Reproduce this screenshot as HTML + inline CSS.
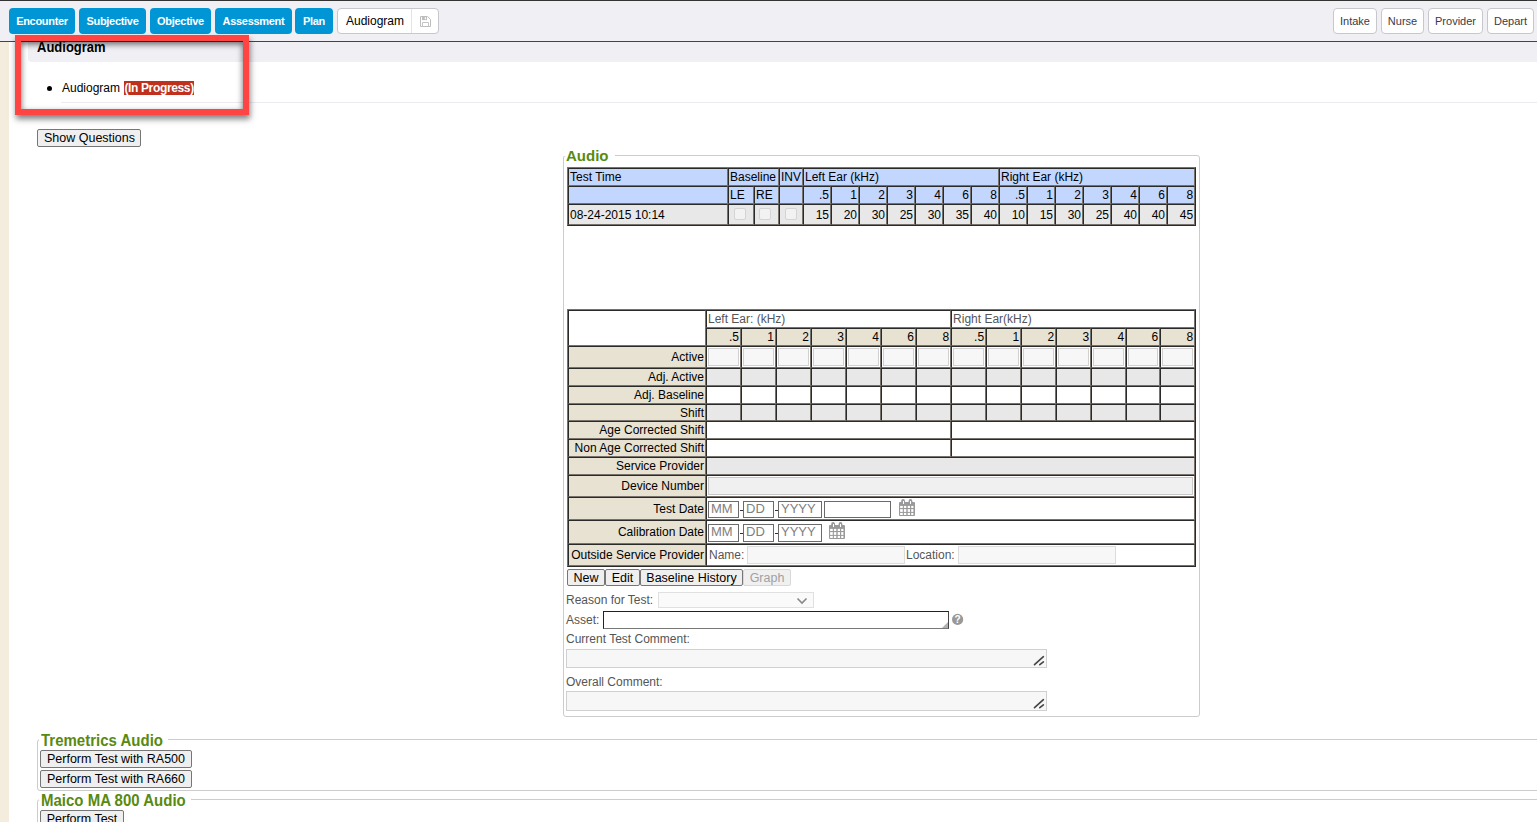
<!DOCTYPE html>
<html><head><meta charset="utf-8">
<style>
*{box-sizing:border-box}
html,body{margin:0;padding:0}
body{width:1537px;height:822px;overflow:hidden;position:relative;background:#fff;font-family:"Liberation Sans",sans-serif;font-size:12px;color:#000}
.abs{position:absolute}
.tb{left:0;top:0;width:1537px;height:42px;background:#efeff4;border-top:1px solid #333;border-bottom:1px solid #444}
.bb{position:absolute;top:8px;height:26px;background:#0096d6;border-radius:4px;color:#fff;font-weight:bold;font-size:11px;letter-spacing:-0.3px;text-align:center;line-height:26px}
.wb{position:absolute;top:8px;height:26px;background:#fff;border:1px solid #c8c8cc;border-radius:4px;color:#3a3a48;font-size:11px;text-align:center;line-height:24px}

.fs{position:absolute;border:1px solid #ccc;border-radius:3px}
.lg{position:absolute;color:#588a10;font-weight:bold;font-size:15px;line-height:17px;transform:scaleY(1.09);transform-origin:0 13px}
.lgc{position:absolute;height:1px;background:#fff}
table.g{position:absolute;border-collapse:separate;border-spacing:0;table-layout:fixed;border-left:1px solid #77736c;border-top:1px solid #77736c;border-right:1px solid #2a2a28;border-bottom:1px solid #2a2a28;font-size:12px}
table.g td{border-left:1px solid #2a2a28;border-top:1px solid #2a2a28;border-right:1px solid #77736c;border-bottom:1px solid #77736c;padding:0 1px;white-space:nowrap;overflow:hidden;line-height:14px}
.hb td{background:#c3d6fe}
.r{text-align:right}
.bg{background:#e8e8e8}
.be{background:#e8e2d3}
.cb{display:block;width:12px;height:12px;border:1px solid #d4d4d4;border-radius:2px;background:#f2f2f2}

.inp{display:block;border:1px solid #d0d0d0;background:#f7f7f7}
.lbl td.be{text-align:right;padding:0}
.dt{position:absolute;height:17px;border:1px solid #6a6a6a;background:#fff;color:#808080;font-size:13px;line-height:13px;padding-left:2px}
.dash{position:absolute;width:3px;height:1px;background:#333}

.btn{position:absolute;height:17px;border:1px solid #767676;border-radius:2px;background:#efefef;font-size:12.5px;line-height:16px;text-align:center;color:#000}
.ph{position:absolute;font-size:12px;line-height:14px;color:#555}
.ta{position:absolute;border:1px solid #d0d0d0;background:#f7f7f7}
</style></head><body>
<!-- toolbar -->
<div class="abs tb"></div>
<div class="bb" style="left:9px;width:66px">Encounter</div>
<div class="bb" style="left:79px;width:67px">Subjective</div>
<div class="bb" style="left:150px;width:61px">Objective</div>
<div class="bb" style="left:215px;width:77px">Assessment</div>
<div class="bb" style="left:295px;width:38px">Plan</div>
<div class="wb" style="left:337px;width:102px;text-align:left;color:#000;font-size:12px;padding-left:8px">Audiogram<div class="abs" style="left:73px;top:0;width:1px;height:24px;background:#e4e4e8"></div><svg class="abs" style="left:82px;top:7px" width="11" height="11" viewBox="0 0 11 11"><path d="M0.5 0.5 H7.6 L10.5 3.4 V10.5 H0.5 Z" stroke="#bdbdbd" fill="none"/><rect x="2" y="0.5" width="5" height="3.6" fill="#bdbdbd"/><rect x="4.8" y="1.2" width="1.1" height="2.2" fill="#fff"/><path d="M2.5 10.5 V6.5 H8.5 V10.5" stroke="#c4c4c4" fill="none"/></svg></div>
<div class="wb" style="left:1333px;width:44px">Intake</div>
<div class="wb" style="left:1381px;width:43px">Nurse</div>
<div class="wb" style="left:1428px;width:55px">Provider</div>
<div class="wb" style="left:1487px;width:47px">Depart</div>

<!-- left strip -->
<div class="abs" style="left:0;top:42px;width:9px;height:780px;background:#f4edde"></div>


<!-- header band -->
<div class="abs" style="left:28px;top:42px;width:1509px;height:20px;background:#efeff4;border-bottom-left-radius:4px"></div>
<div class="abs" style="left:37px;top:40px;font-weight:bold;font-size:13px;line-height:16px;transform:scaleY(1.08);transform-origin:0 100%">Audiogram</div>
<div class="abs" style="left:47px;top:86px;width:5px;height:5px;border-radius:50%;background:#000"></div>
<div class="abs" style="left:62px;top:81px;line-height:14px;font-size:12px">Audiogram <span style="background:#c0301c;color:#fff;font-weight:bold;letter-spacing:-0.35px;margin-left:1px">(In Progress)</span></div>
<div class="abs" style="left:61px;top:102px;width:1476px;height:1px;background:#ebebf0"></div>
<!-- red annotation box -->
<div class="abs" style="left:15px;top:35px;width:234px;height:80px;border:6px solid #ff4444;box-shadow:1px 4px 6px rgba(0,0,0,0.5), inset 0 3px 6px rgba(0,0,0,0.6)"></div>
<!-- show questions -->
<div class="abs" style="left:37px;top:129px;width:104px;height:18px;border:1px solid #767676;border-radius:2px;background:#efefef;font-size:12.5px;line-height:16px;padding-left:6px">Show Questions</div>
<div class="fs" style="left:563px;top:155px;width:637px;height:562px"></div><div class="lgc" style="left:563px;top:154px;width:52px;height:2px"></div><div class="lg" style="left:566px;top:147px;transform:none">Audio</div><table class="g" style="left:567px;top:167px;width:629px"><colgroup><col style="width:160px"><col style="width:26px"><col style="width:25px"><col style="width:24px"><col style="width:28px"><col style="width:28px"><col style="width:28px"><col style="width:28px"><col style="width:28px"><col style="width:28px"><col style="width:28px"><col style="width:28px"><col style="width:28px"><col style="width:28px"><col style="width:28px"><col style="width:28px"><col style="width:28px"><col style="width:28px"></colgroup><tr class="hb" style="height:18px"><td>Test Time</td><td colspan="2">Baseline</td><td>INV</td><td colspan="7">Left Ear (kHz)</td><td colspan="7">Right Ear (kHz)</td></tr><tr class="hb" style="height:18px"><td></td><td>LE</td><td>RE</td><td></td><td class="r">.5</td><td class="r">1</td><td class="r">2</td><td class="r">3</td><td class="r">4</td><td class="r">6</td><td class="r">8</td><td class="r">.5</td><td class="r">1</td><td class="r">2</td><td class="r">3</td><td class="r">4</td><td class="r">6</td><td class="r">8</td></tr><tr class="bg" style="height:21px"><td>08-24-2015 10:14</td><td style="padding:3px 0 0 5px;vertical-align:top"><span class="cb"></span></td><td style="padding:3px 0 0 4px;vertical-align:top"><span class="cb"></span></td><td style="padding:3px 0 0 5px;vertical-align:top"><span class="cb"></span></td><td class="r">15</td><td class="r">20</td><td class="r">30</td><td class="r">25</td><td class="r">30</td><td class="r">35</td><td class="r">40</td><td class="r">10</td><td class="r">15</td><td class="r">30</td><td class="r">25</td><td class="r">40</td><td class="r">40</td><td class="r">45</td></tr></table><table class="g" style="left:567px;top:309px;width:629px"><colgroup><col style="width:138px"><col style="width:35px"><col style="width:35px"><col style="width:35px"><col style="width:35px"><col style="width:35px"><col style="width:35px"><col style="width:35px"><col style="width:35px"><col style="width:35px"><col style="width:35px"><col style="width:35px"><col style="width:35px"><col style="width:34px"><col style="width:35px"></colgroup><tr style="height:18px"><td rowspan="2"></td><td colspan="7" style="color:#555">Left Ear: (kHz)</td><td colspan="7" style="color:#555">Right Ear(kHz)</td></tr><tr style="height:18px"><td class="r be">.5</td><td class="r be">1</td><td class="r be">2</td><td class="r be">3</td><td class="r be">4</td><td class="r be">6</td><td class="r be">8</td><td class="r be">.5</td><td class="r be">1</td><td class="r be">2</td><td class="r be">3</td><td class="r be">4</td><td class="r be">6</td><td class="r be">8</td></tr><tr style="height:22px"><td class="be r" style="padding:0 1px 0 0">Active</td><td style="padding:1px"><span class="inp" style="width:31px;height:18px"></span></td><td style="padding:1px"><span class="inp" style="width:31px;height:18px"></span></td><td style="padding:1px"><span class="inp" style="width:31px;height:18px"></span></td><td style="padding:1px"><span class="inp" style="width:31px;height:18px"></span></td><td style="padding:1px"><span class="inp" style="width:31px;height:18px"></span></td><td style="padding:1px"><span class="inp" style="width:31px;height:18px"></span></td><td style="padding:1px"><span class="inp" style="width:31px;height:18px"></span></td><td style="padding:1px"><span class="inp" style="width:31px;height:18px"></span></td><td style="padding:1px"><span class="inp" style="width:31px;height:18px"></span></td><td style="padding:1px"><span class="inp" style="width:31px;height:18px"></span></td><td style="padding:1px"><span class="inp" style="width:31px;height:18px"></span></td><td style="padding:1px"><span class="inp" style="width:31px;height:18px"></span></td><td style="padding:1px"><span class="inp" style="width:30px;height:18px"></span></td><td style="padding:1px"><span class="inp" style="width:31px;height:18px"></span></td></tr><tr style="height:18px"><td class="be r" style="padding:0 1px 0 0">Adj. Active</td><td class="bg"></td><td class="bg"></td><td class="bg"></td><td class="bg"></td><td class="bg"></td><td class="bg"></td><td class="bg"></td><td class="bg"></td><td class="bg"></td><td class="bg"></td><td class="bg"></td><td class="bg"></td><td class="bg"></td><td class="bg"></td></tr><tr style="height:18px"><td class="be r" style="padding:0 1px 0 0">Adj. Baseline</td><td></td><td></td><td></td><td></td><td></td><td></td><td></td><td></td><td></td><td></td><td></td><td></td><td></td><td></td></tr><tr style="height:17px"><td class="be r" style="padding:0 1px 0 0">Shift</td><td class="bg"></td><td class="bg"></td><td class="bg"></td><td class="bg"></td><td class="bg"></td><td class="bg"></td><td class="bg"></td><td class="bg"></td><td class="bg"></td><td class="bg"></td><td class="bg"></td><td class="bg"></td><td class="bg"></td><td class="bg"></td></tr><tr style="height:18px"><td class="be r" style="padding:0 1px 0 0">Age Corrected Shift</td><td colspan="7"></td><td colspan="7"></td></tr><tr style="height:18px"><td class="be r" style="padding:0 1px 0 0">Non Age Corrected Shift</td><td colspan="7"></td><td colspan="7"></td></tr><tr style="height:18px"><td class="be r" style="padding:0 1px 0 0">Service Provider</td><td colspan="14" class="bg"></td></tr><tr style="height:22px"><td class="be r" style="padding:0 1px 0 0">Device Number</td><td colspan="14" style="padding:1px"><span class="inp" style="height:18px;background:#f0f0f0;border-color:#c8c8c8"></span></td></tr><tr style="height:23px"><td class="be r" style="padding:0 1px 0 0">Test Date</td><td colspan="14"></td></tr><tr style="height:24px"><td class="be r" style="padding:0 1px 0 0">Calibration Date</td><td colspan="14"></td></tr><tr style="height:22px"><td class="be r" style="padding:0 1px 0 0">Outside Service Provider</td><td colspan="14" style="color:#555;padding-left:2px">Name:</td></tr></table><div class="dt" style="left:708px;top:501px;width:31px;height:17px">MM</div><div class="dash" style="left:740px;top:510px"></div><div class="dt" style="left:743px;top:501px;width:31px;height:17px">DD</div><div class="dash" style="left:775px;top:510px"></div><div class="dt" style="left:778px;top:501px;width:44px;height:17px">YYYY</div><div class="dt" style="left:824px;top:501px;width:67px;height:17px"></div><div class="abs" style="left:899px;top:499px;width:17px;height:18px"><svg width="17" height="18" viewBox="0 0 17 18"><rect x="0" y="3" width="16" height="14" rx="1" fill="#9a9a9a"/><rect x="2.2" y="0" width="3.8" height="5.5" rx="1.9" fill="#9a9a9a"/><rect x="9.6" y="0" width="3.8" height="5.5" rx="1.9" fill="#9a9a9a"/><rect x="4" y="2" width="1" height="3" fill="#fff"/><rect x="11" y="2" width="1" height="3" fill="#fff"/><rect x="1.1" y="6.9" width="2.7" height="2.1" fill="#fff"/><rect x="1.1" y="10.1" width="2.7" height="2.8" fill="#fff"/><rect x="1.1" y="13.9" width="2.7" height="2.1" fill="#fff"/><rect x="4.9" y="6.9" width="2.4" height="2.1" fill="#fff"/><rect x="4.9" y="10.1" width="2.4" height="2.8" fill="#fff"/><rect x="4.9" y="13.9" width="2.4" height="2.1" fill="#fff"/><rect x="8.7" y="6.9" width="2.3" height="2.1" fill="#fff"/><rect x="8.7" y="10.1" width="2.3" height="2.8" fill="#fff"/><rect x="8.7" y="13.9" width="2.3" height="2.1" fill="#fff"/><rect x="12.2" y="6.9" width="2.2" height="2.1" fill="#fff"/><rect x="12.2" y="10.1" width="2.2" height="2.8" fill="#fff"/><rect x="12.2" y="13.9" width="2.2" height="2.1" fill="#fff"/></svg></div><div class="dt" style="left:708px;top:524px;width:31px;height:18px">MM</div><div class="dash" style="left:740px;top:533px"></div><div class="dt" style="left:743px;top:524px;width:31px;height:18px">DD</div><div class="dash" style="left:775px;top:533px"></div><div class="dt" style="left:778px;top:524px;width:44px;height:18px">YYYY</div><div class="abs" style="left:829px;top:522px;width:17px;height:18px"><svg width="17" height="18" viewBox="0 0 17 18"><rect x="0" y="3" width="16" height="14" rx="1" fill="#9a9a9a"/><rect x="2.2" y="0" width="3.8" height="5.5" rx="1.9" fill="#9a9a9a"/><rect x="9.6" y="0" width="3.8" height="5.5" rx="1.9" fill="#9a9a9a"/><rect x="4" y="2" width="1" height="3" fill="#fff"/><rect x="11" y="2" width="1" height="3" fill="#fff"/><rect x="1.1" y="6.9" width="2.7" height="2.1" fill="#fff"/><rect x="1.1" y="10.1" width="2.7" height="2.8" fill="#fff"/><rect x="1.1" y="13.9" width="2.7" height="2.1" fill="#fff"/><rect x="4.9" y="6.9" width="2.4" height="2.1" fill="#fff"/><rect x="4.9" y="10.1" width="2.4" height="2.8" fill="#fff"/><rect x="4.9" y="13.9" width="2.4" height="2.1" fill="#fff"/><rect x="8.7" y="6.9" width="2.3" height="2.1" fill="#fff"/><rect x="8.7" y="10.1" width="2.3" height="2.8" fill="#fff"/><rect x="8.7" y="13.9" width="2.3" height="2.1" fill="#fff"/><rect x="12.2" y="6.9" width="2.2" height="2.1" fill="#fff"/><rect x="12.2" y="10.1" width="2.2" height="2.8" fill="#fff"/><rect x="12.2" y="13.9" width="2.2" height="2.1" fill="#fff"/></svg></div><div class="ta" style="left:747px;top:546px;width:158px;height:18px;border-color:#dcdcdc"></div><div class="ph" style="left:906px;top:548px">Location:</div><div class="ta" style="left:958px;top:546px;width:158px;height:18px;border-color:#dcdcdc"></div><div class="btn" style="left:567px;top:569px;width:38px">New</div><div class="btn" style="left:605px;top:569px;width:35px">Edit</div><div class="btn" style="left:640px;top:569px;width:103px">Baseline History</div><div class="btn" style="left:743px;top:569px;width:48px;border-color:#d8d8d8;color:#a0a0a0;background:#f0f0f0">Graph</div><div class="ph" style="left:566px;top:593px">Reason for Test:</div><div class="ta" style="left:658px;top:592px;width:156px;height:16px;border-color:#e0e0e0;background:#fafafa"><svg class="abs" style="left:137px;top:4px" width="12" height="8" viewBox="0 0 12 8"><path d="M1.5 1.5 L6 6 L10.5 1.5" stroke="#888" stroke-width="1.6" fill="none"/></svg></div><div class="ph" style="left:566px;top:613px">Asset:</div><div class="abs" style="left:603px;top:611px;width:346px;height:18px;border:1px solid #222;border-bottom-color:#777;border-right-color:#444;background:#fff"><svg class="abs" style="right:0;bottom:0" width="6" height="6"><path d="M6 0 L6 6 L0 6 Z" fill="#b0b0b0"/></svg></div><svg class="abs" style="left:951px;top:613px" width="13" height="13" viewBox="0 0 13 13"><circle cx="6.6" cy="6.4" r="5.6" fill="#999"/><text x="6.6" y="10.3" text-anchor="middle" font-family="Liberation Sans" font-weight="bold" font-size="10" fill="#fff">?</text></svg><div class="ph" style="left:566px;top:632px">Current Test Comment:</div><div class="ta" style="left:566px;top:649px;width:481px;height:19px"><svg class="abs" style="right:1px;bottom:1px" width="12" height="11" viewBox="0 0 12 11"><path d="M1.5 9.7 L10.4 1.7 M6.8 9.7 L10.4 6.9" stroke="#444" stroke-width="1.6" stroke-linecap="round"/></svg></div><div class="ph" style="left:566px;top:675px">Overall Comment:</div><div class="ta" style="left:566px;top:691px;width:481px;height:20px"><svg class="abs" style="right:1px;bottom:1px" width="12" height="11" viewBox="0 0 12 11"><path d="M1.5 9.7 L10.4 1.7 M6.8 9.7 L10.4 6.9" stroke="#444" stroke-width="1.6" stroke-linecap="round"/></svg></div><div class="fs" style="left:37px;top:739px;width:1520px;height:52px"></div><div class="lgc" style="left:39px;top:739px;width:129px"></div><div class="lg" style="left:41px;top:732px">Tremetrics Audio</div><div class="btn" style="left:40px;top:750px;width:152px;height:18px;line-height:16px">Perform Test with RA500</div><div class="btn" style="left:40px;top:770px;width:152px;height:18px;line-height:16px">Perform Test with RA660</div><div class="fs" style="left:37px;top:799px;width:1520px;height:60px"></div><div class="lgc" style="left:39px;top:799px;width:152px"></div><div class="lg" style="left:41px;top:792px">Maico MA 800 Audio</div><div class="btn" style="left:40px;top:810px;width:84px;height:18px;line-height:16px">Perform Test</div></body></html>
